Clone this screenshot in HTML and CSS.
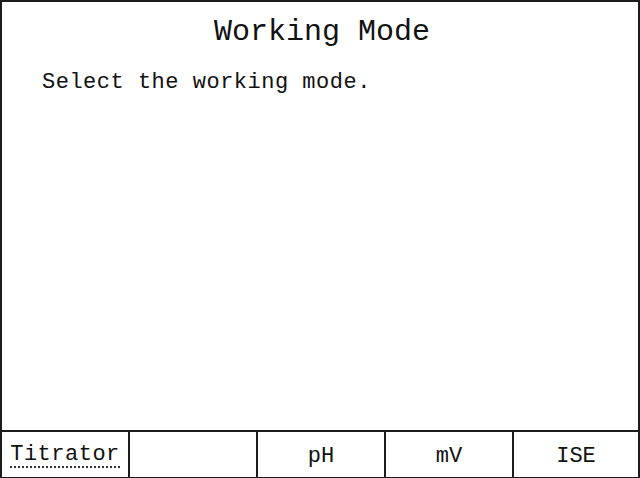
FILE: index.html
```html
<!DOCTYPE html>
<html>
<head>
<meta charset="utf-8">
<link rel="stylesheet" href="styles.css">
</head>
<body>
<div class="screen">
  <div class="content">
    <div class="title">Working Mode</div>
    <div class="message">Select the working mode.</div>
  </div>
  <div class="softkeys">
    <div class="key"><span class="focused">Titrator</span></div>
    <div class="key"></div>
    <div class="key">pH</div>
    <div class="key">mV</div>
    <div class="key last">ISE</div>
  </div>
</div>
</body>
</html>
```
FILE: styles.css
```css
html, body {
  margin: 0;
  padding: 0;
  background: #fff;
}
.screen {
  width: 640px;
  height: 478px;
  box-sizing: border-box;
  border: 2px solid #1c1c1c;
  border-bottom: 1px solid #1c1c1c;
  display: flex;
  flex-direction: column;
  font-family: "Liberation Mono", "DejaVu Sans Mono", monospace;
  color: #111;
}
.content {
  flex: 1;
}
.title {
  text-align: center;
  font-size: 30px;
  line-height: 30px;
  margin-top: 15px;
  padding-left: 4px;
}
.message {
  font-size: 22px;
  line-height: 22px;
  margin-top: 25px;
  padding-left: 40px;
  letter-spacing: 0.5px;
}
.softkeys {
  display: grid;
  grid-template-columns: 128px 128px 128px 128px 124px;
  height: 45px;
  border-top: 2px solid #1c1c1c;
}
.key {
  display: flex;
  align-items: center;
  justify-content: center;
  border-right: 2px solid #1c1c1c;
  font-size: 22px;
  padding-top: 3px;
}
.key.last {
  border-right: none;
}
.focused {
  border-bottom: 2px dotted #333;
  line-height: 20px;
  padding-bottom: 1px;
  letter-spacing: 0.5px;
}
```
